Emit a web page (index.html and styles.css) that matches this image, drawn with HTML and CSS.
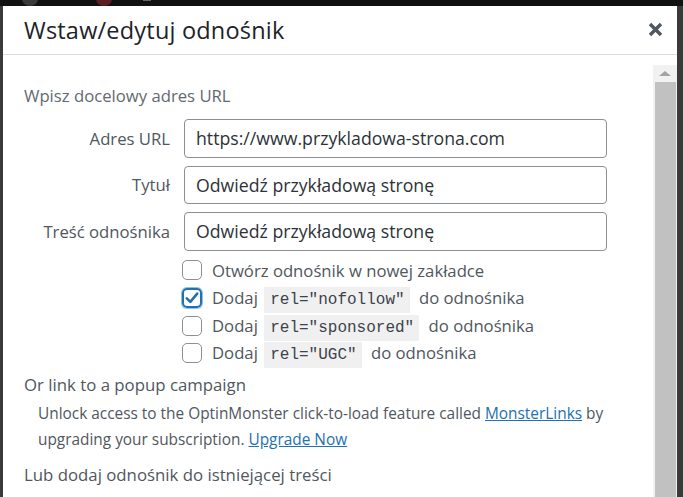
FILE: index.html
```html
<!DOCTYPE html>
<html lang="pl">
<head>
<meta charset="utf-8">
<title>Wstaw/edytuj odnośnik</title>
<link rel="stylesheet" href="styles.css">
</head>
<body>
<div class="topbar">
  <span class="dot dot-a"></span>
  <span class="dot dot-b"></span>
  <span class="tri"></span>
</div>
<div class="stage">
  <div class="modal">
    <div class="modal-header">
      <h1 class="modal-title">Wstaw/edytuj odnośnik</h1>
      <button class="close" aria-label="Zamknij">
        <svg width="15" height="15" viewBox="0 0 15 15"><path d="M2 2 L13 13 M13 2 L2 13" stroke="#50575e" stroke-width="3.4"/></svg>
      </button>
    </div>
    <div class="modal-body">
      <div class="main">
        <p class="intro">Wpisz docelowy adres URL</p>
        <div class="fields">
          <label class="field-label">Adres URL</label>
          <div class="input">https://www.przykladowa-strona.com</div>
          <label class="field-label">Tytuł</label>
          <div class="input">Odwiedź przykładową stronę</div>
          <label class="field-label">Treść odnośnika</label>
          <div class="input">Odwiedź przykładową stronę</div>
        </div>
        <div class="checks">
          <div class="check"><span class="box"></span><span>Otwórz odnośnik w nowej zakładce</span></div>
          <div class="check"><span class="box checked"><svg width="16" height="16" viewBox="0 0 16 16"><path d="M2.8 8.3 L6.3 11.8 L13.2 3.6" fill="none" stroke="#2271b1" stroke-width="2.6" stroke-linecap="round" stroke-linejoin="round"/></svg></span><span>Dodaj <code>rel="nofollow"</code> do odnośnika</span></div>
          <div class="check"><span class="box"></span><span>Dodaj <code>rel="sponsored"</code> do odnośnika</span></div>
          <div class="check"><span class="box"></span><span>Dodaj <code>rel="UGC"</code> do odnośnika</span></div>
        </div>
        <p class="section first">Or link to a popup campaign</p>
        <p class="note"><span>Unlock access to the OptinMonster click-to-load feature called</span> <a href="#">MonsterLinks</a> <span>by</span><br><span>upgrading your subscription.</span> <a href="#">Upgrade Now</a></p>
        <p class="section last">Lub dodaj odnośnik do istniejącej treści</p>
      </div>
      <div class="scrollbar">
        <div class="sb-up"><span class="sb-arrow"></span></div>
        <div class="sb-thumb"></div>
      </div>
    </div>
  </div>
</div>
</body>
</html>
```

FILE: styles.css
```css
* { box-sizing: border-box; }
html, body { margin: 0; padding: 0; height: 100%; }
body {
  background: #3a3a3a;
  font-family: "Open Sans", "Noto Sans", sans-serif;
  overflow: hidden;
}
.topbar {
  height: 6px;
  background: #111;
  position: relative;
}
.dot {
  position: absolute;
  top: -8px;
  width: 16px;
  height: 14px;
  border-radius: 50%;
  background: #3a3a3a;
}
.dot-a { left: 22px; }
.dot-b { left: 96px; background: #5a1f22; }
.tri {
  position: absolute;
  left: 143px;
  top: 0;
  width: 8px;
  height: 4px;
  border-top: 1px solid #666;
}
.stage {
  padding-left: 3px;
  height: calc(100% - 6px);
}
.modal {
  width: 674px;
  height: 100%;
  background: #fff;
  display: flex;
  flex-direction: column;
}
.modal-header {
  height: 49px;
  border-bottom: 1px solid #dcdcde;
  display: flex;
  align-items: center;
  justify-content: space-between;
  padding: 0 13px 0 21px;
  flex: none;
}
.modal-title {
  margin: 0;
  font-size: 23.5px;
  font-weight: 500;
  color: #1d2327;
  letter-spacing: 0.2px;
}
.close {
  border: 0;
  background: none;
  padding: 0;
  width: 17px;
  height: 17px;
  display: flex;
  align-items: center;
  justify-content: center;
  margin-top: -2px;
}
.modal-body {
  flex: 1;
  display: flex;
  min-height: 0;
}
.main {
  flex: 1;
  padding: 30px 0 0 21px;
  color: #50575e;
  font-size: 16.7px;
}
.intro {
  margin: 0 0 12px;
  line-height: 22px;
  color: #646970;
  font-size: 16.7px;
}
.fields {
  display: grid;
  grid-template-columns: 146px 423px;
  column-gap: 14px;
  row-gap: 8px;
  align-items: center;
}
.field-label {
  text-align: right;
  font-size: 16.7px;
  color: #50575e;
}
.input {
  height: 38.5px;
  border: 1px solid #8c8f94;
  border-radius: 4px;
  padding: 0 11px;
  display: flex;
  align-items: center;
  font-size: 17.7px;
  color: #2c3338;
}
.checks {
  margin: 6px 0 0 158px;
  display: flex;
  flex-direction: column;
}
.check {
  height: 27.7px;
  display: flex;
  align-items: center;
  gap: 10px;
  font-size: 16.7px;
  color: #50575e;
  white-space: nowrap;
}
.box {
  width: 20px;
  height: 20px;
  border: 1px solid #8c8f94;
  border-radius: 5px;
  flex: none;
  display: flex;
  align-items: center;
  justify-content: center;
}
.box.checked {
  border: 2px solid #2271b1;
  box-shadow: 0 0 0 1px #8fbfe8;
}
code {
  font-family: "Liberation Mono", "DejaVu Sans Mono", monospace;
  font-size: 16px;
  line-height: 19px;
  background: #f0f0f1;
  padding: 4px 5px 4px 6px;
  margin: 0 5px 0 2px;
  color: #3c434a;
}
.section {
  margin: 0;
  font-size: 16.8px;
  line-height: 26px;
  color: #50575e;
}
.section.first { margin-top: 5px; }
.section.last { margin-top: 9px; }
.note {
  margin: 3px 0 0 14px;
  font-size: 15.4px;
  line-height: 26px;
  color: #50575e;
  width: 590px;
}
.note a {
  color: #2271b1;
}
.scrollbar {
  width: 24px;
  margin-top: 10px;
  background: #f1f1f1;
  display: flex;
  flex-direction: column;
  flex: none;
}
.sb-up {
  height: 17px;
  display: flex;
  align-items: center;
  justify-content: center;
}
.sb-arrow {
  width: 0;
  height: 0;
  border-left: 6px solid transparent;
  border-right: 6px solid transparent;
  border-bottom: 5px solid #a3a3a3;
}
.sb-thumb {
  flex: 1;
  margin: 0 1px 0 2px;
  background: #c1c1c1;
}
```
